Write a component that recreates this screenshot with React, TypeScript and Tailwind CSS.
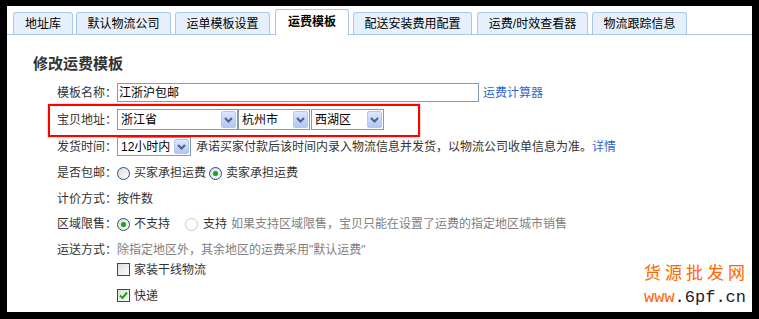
import React from "react";

const tabs: { label: string; cls: string; active?: boolean }[] = [
  { label: "地址库", cls: "ml-0 w-[60px]" },
  { label: "默认物流公司", cls: "ml-[3px] w-[95px]" },
  { label: "运单模板设置", cls: "ml-[4px] w-[95px]" },
  { label: "运费模板", cls: "ml-[5px] w-[74px]", active: true },
  { label: "配送安装费用配置", cls: "ml-[4px] w-[119px]" },
  { label: "运费/时效查看器", cls: "ml-[5px] w-[111px]" },
  { label: "物流跟踪信息", cls: "ml-[4px] w-[95px]" },
];

function Arrow() {
  return (
    <span className="flex items-center justify-center w-[15px] h-full rounded-[2px] border border-[#b4c7f2] bg-linear-to-b from-[#dbe6fe] to-[#b3c6f4] shrink-0">
      <svg width="9" height="6" viewBox="0 0 9 6">
        <polyline points="1,1 4.5,4.5 8,1" fill="none" stroke="#4d6185" strokeWidth="2" />
      </svg>
    </span>
  );
}

function Select({ value, cls }: { value: string; cls: string }) {
  return (
    <div className={`flex items-stretch border border-[#7f9db9] bg-white p-[1px] ${cls}`}>
      <span className="flex-1 flex items-center pl-[2px] text-black leading-none">{value}</span>
      <Arrow />
    </div>
  );
}

function Radio({ checked, disabled }: { checked?: boolean; disabled?: boolean }) {
  return (
    <span
      className={
        disabled
          ? "flex items-center justify-center w-[13px] h-[13px] rounded-full border border-[#cac8bb] bg-white shrink-0"
          : "flex items-center justify-center w-[13px] h-[13px] rounded-full border border-[#1c5180] bg-linear-to-br from-[#dcdcd7] to-white shrink-0"
      }
    >
      {checked && <span className="w-[5px] h-[5px] rounded-full bg-[#21a121] shadow-[0_0_1px_#7ee07e]" />}
    </span>
  );
}

function Checkbox({ checked }: { checked?: boolean }) {
  return (
    <span className="flex items-center justify-center w-[13px] h-[13px] border border-[#1c5180] bg-linear-to-br from-[#dcdcd7] to-white shrink-0">
      {checked && (
        <svg width="9" height="9" viewBox="0 0 9 9">
          <polyline points="1,4.5 3.5,7 8,1.5" fill="none" stroke="#21a121" strokeWidth="2" />
        </svg>
      )}
    </span>
  );
}

function Label({ text }: { text: string }) {
  return <span className="w-[60px] shrink-0 text-[#333]">{text}</span>;
}

export default function App() {
  return (
    <div className="w-[759px] h-[319px] bg-black pt-[6px] pl-[7px] pr-[7px] pb-[7px] font-['Liberation_Sans','Noto_Sans_CJK_SC',sans-serif] text-[12px] leading-[14px]">
      <div className="relative w-full h-full bg-white overflow-hidden">
        {/* tabs */}
        <div className="flex items-end h-[29px] border-b border-[#a8c8f0] pl-[6px]">
          {tabs.map((t) =>
            t.active ? (
              <div
                key={t.label}
                className={`${t.cls} h-[26px] -mb-px flex items-start justify-center pt-[5px] rounded-t-[3px] border border-b-0 border-[#a8c8f0] bg-white font-bold text-black`}
              >
                {t.label}
              </div>
            ) : (
              <div
                key={t.label}
                className={`${t.cls} h-[22px] flex items-center justify-center rounded-t-[3px] border border-b-0 border-[#a8c8f0] bg-[#e6f0fc] text-black`}
              >
                {t.label}
              </div>
            )
          )}
        </div>

        {/* title */}
        <div className="ml-[26px] mt-[19px] h-[20px] leading-[20px] text-[15px] font-bold text-[#333]">修改运费模板</div>

        {/* form */}
        <div className="ml-[50px] flex flex-col">
          <div className="mt-[9px] h-[19px] flex items-center">
            <Label text="模板名称：" />
            <div className="w-[362px] h-[19px] border border-[#7f9db9] flex items-center pl-[1px] text-black">江浙沪包邮</div>
            <span className="ml-[4px] text-[#3366cc]">运费计算器</span>
          </div>

          <div className="mt-[2px] -ml-[9px] w-[372px] h-[33px] border-2 border-[#ff0000] shadow-[0_0_2px_#ff9090] flex items-start pt-[3px] pl-[7px]">
            <span className="w-[60px] h-[21px] flex items-center shrink-0 text-[#333]">宝贝地址：</span>
            <Select value="浙江省" cls="w-[121px] h-[21px]" />
            <Select value="杭州市" cls="ml-[0px] w-[72px] h-[21px]" />
            <Select value="西湖区" cls="ml-[1px] w-[73px] h-[21px]" />
          </div>

          <div className="h-[19px] flex items-center">
            <Label text="发货时间：" />
            <Select value="12小时内" cls="w-[74px] h-[19px]" />
            <span className="ml-[5px] text-[#333]">承诺买家付款后该时间内录入物流信息并发货，以物流公司收单信息为准。</span>
            <span className="text-[#3366cc]">详情</span>
          </div>

          <div className="mt-[4px] h-[26px] flex items-center">
            <Label text="是否包邮：" />
            <Radio />
            <span className="ml-[4px] text-[#333]">买家承担运费</span>
            <span className="ml-[3px]"><Radio checked /></span>
            <span className="ml-[4px] text-[#333]">卖家承担运费</span>
          </div>

          <div className="h-[25px] flex items-center">
            <Label text="计价方式：" />
            <span className="text-[#333]">按件数</span>
          </div>

          <div className="h-[26px] flex items-center">
            <Label text="区域限售：" />
            <Radio checked />
            <span className="ml-[4px] text-[#333]">不支持</span>
            <span className="ml-[15px]"><Radio disabled /></span>
            <span className="ml-[5px] text-[#333]">支持</span>
            <span className="ml-[4px] text-[#808080]">如果支持区域限售，宝贝只能在设置了运费的指定地区城市销售</span>
          </div>

          <div className="h-[26px] flex items-center">
            <Label text="运送方式：" />
            <span className="text-[#808080]">除指定地区外，其余地区的运费采用"默认运费"</span>
          </div>

          <div className="h-[13px] flex items-center pl-[60px]">
            <Checkbox />
            <span className="ml-[4px] text-[#333]">家装干线物流</span>
          </div>

          <div className="mt-[13px] h-[13px] flex items-center pl-[60px]">
            <Checkbox checked />
            <span className="ml-[4px] text-[#333]">快递</span>
          </div>
        </div>

        {/* watermark */}
        <div className="absolute left-[637px] top-[257px] flex flex-col">
          <span className="text-[17px] leading-[22px] tracking-[4px] text-[#ff6600]">货源批发网</span>
          <span className="mt-[4px] text-[17px] leading-[18px] font-['Liberation_Mono',monospace]">
            <span className="text-[#ff6600]">www</span>
            <span className="text-[#222]">.6pf.cn</span>
          </span>
        </div>
      </div>
    </div>
  );
}
